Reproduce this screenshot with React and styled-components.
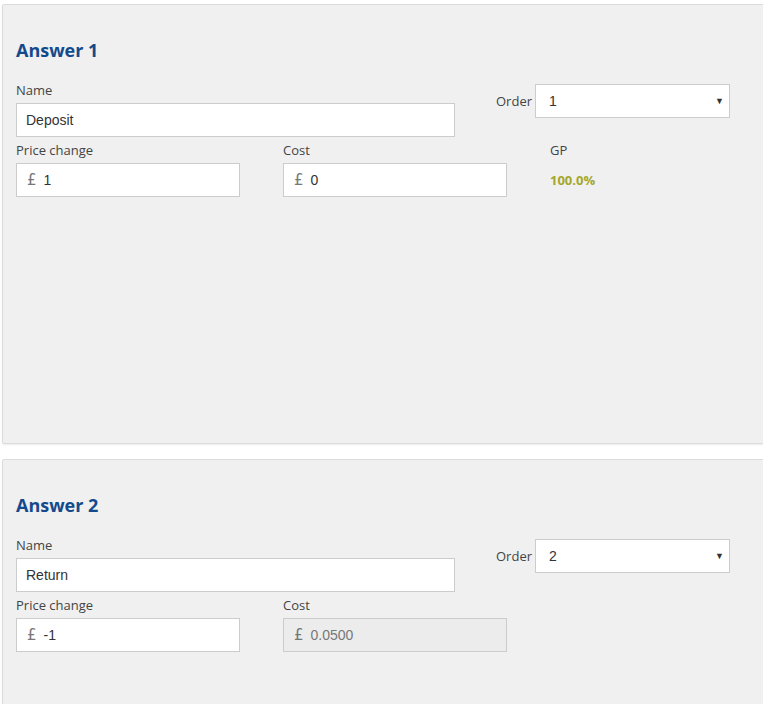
import React from "react";
import styled, { createGlobalStyle } from "styled-components";

const GlobalStyle = createGlobalStyle`
  html, body {
    margin: 0;
    padding: 0;
    background: #fff;
    overflow: hidden;
  }
  body {
    padding: 4px 0 0 2px;
    font-family: "Open Sans", "Noto Sans", sans-serif;
  }
`;

const answers = [
  { id: 1, name: "Deposit", order: "1", price: "1", cost: "0", gp: "100.0%", costLocked: false },
  { id: 2, name: "Return", order: "2", price: "-1", cost: "0.0500", gp: null, costLocked: true },
];

const App = () => {
  return (
    <>
      <GlobalStyle />
      <Page>
        {answers.map((a) => (
          <Card key={a.id}>
            <Heading>Answer {a.id}</Heading>
            <TopRow>
              <Field width={439}>
                <Label>Name</Label>
                <TextBox defaultValue={a.name} />
              </Field>
              <OrderWrap>
                <InlineLabel>Order</InlineLabel>
                <SelectBox>
                  <span>{a.order}</span>
                  <Caret>▼</Caret>
                </SelectBox>
              </OrderWrap>
            </TopRow>
            <BottomRow>
              <Field width={224}>
                <Label>Price change</Label>
                <MoneyBox>
                  <Pound>£</Pound>
                  <MoneyValue>{a.price}</MoneyValue>
                </MoneyBox>
              </Field>
              <Field width={224}>
                <Label>Cost</Label>
                <MoneyBox locked={a.costLocked}>
                  <Pound>£</Pound>
                  <MoneyValue locked={a.costLocked}>{a.cost}</MoneyValue>
                </MoneyBox>
              </Field>
              {a.gp && (
                <GpBlock>
                  <Label>GP</Label>
                  <GpValue>{a.gp}</GpValue>
                </GpBlock>
              )}
            </BottomRow>
          </Card>
        ))}
      </Page>
    </>
  );
};

const Page = styled.div`
  display: flex;
  flex-direction: column;
  gap: 15px;
  margin-right: -30px;
`;

const Card = styled.section`
  box-sizing: border-box;
  height: 440px;
  background: #f0f0f0;
  border: 1px solid #dcdcdc;
  box-shadow: 0 1px 2px rgba(0, 0, 0, 0.08);
  border-radius: 2px;
  padding: 33px 13px 0 13px;
`;

const Heading = styled.h2`
  margin: 0 0 20px 0;
  font-size: 18px;
  line-height: 24px;
  font-weight: 700;
  color: #134a8c;
`;

const TopRow = styled.div`
  display: flex;
  align-items: flex-start;
`;

const BottomRow = styled.div`
  display: flex;
  gap: 43px;
  margin-top: 5px;
`;

const Field = styled.div`
  display: flex;
  flex-direction: column;
  width: ${(p) => p.width}px;
`;

const Label = styled.label`
  font-size: 13px;
  line-height: 17px;
  color: #444;
  margin-bottom: 4px;
`;

const InlineLabel = styled.span`
  font-size: 13px;
  color: #444;
  margin-right: 3px;
`;

const TextBox = styled.input`
  box-sizing: border-box;
  height: 34px;
  width: 100%;
  border: 1px solid #ccc;
  background: #fff;
  padding: 0 9px;
  font-family: "Liberation Sans", Arial, sans-serif;
  font-size: 14px;
  color: #333;
  outline: none;
`;

const OrderWrap = styled.div`
  display: flex;
  align-items: center;
  margin-left: 41px;
  margin-top: 2px;
`;

const SelectBox = styled.div`
  box-sizing: border-box;
  width: 195px;
  height: 34px;
  border: 1px solid #ccc;
  background: #fff;
  display: flex;
  align-items: center;
  justify-content: space-between;
  padding: 0 5px 0 13px;
  font-family: "Liberation Sans", Arial, sans-serif;
  font-size: 14px;
  color: #333;
`;

const Caret = styled.span`
  font-size: 9px;
  color: #333;
`;

const MoneyBox = styled.div`
  box-sizing: border-box;
  height: 34px;
  border: 1px solid #ccc;
  background: ${(p) => (p.locked ? "#ececec" : "#fff")};
  display: flex;
  align-items: center;
  padding: 0 10px;
`;

const Pound = styled.span`
  font-family: "DejaVu Sans", sans-serif;
  font-size: 15px;
  color: #777;
  margin-right: 7px;
`;

const MoneyValue = styled.span`
  font-family: "Liberation Sans", Arial, sans-serif;
  font-size: 14px;
  color: ${(p) => (p.locked ? "#777" : "#333")};
`;

const GpBlock = styled.div`
  display: flex;
  flex-direction: column;
`;

const GpValue = styled.div`
  font-size: 13px;
  font-weight: 700;
  color: #a4a72c;
  margin-top: 8px;
`;

export default App;
